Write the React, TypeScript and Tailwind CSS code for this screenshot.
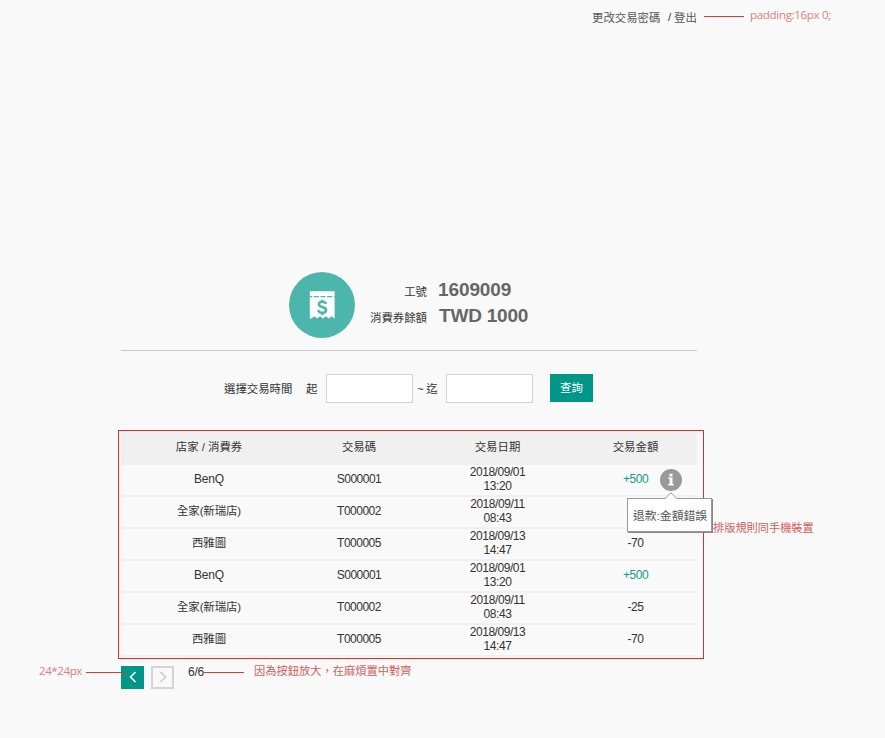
import React from 'react';

type Row = { shop: string; code: string; date: string; time: string; amount?: string; info?: string };

const rows: Row[] = [
  { shop: 'BenQ', code: 'S000001', date: '2018/09/01', time: '13:20', amount: '+500', info: '退款:金額錯誤' },
  { shop: '全家(新瑞店)', code: 'T000002', date: '2018/09/11', time: '08:43' },
  { shop: '西雅圖', code: 'T000005', date: '2018/09/13', time: '14:47', amount: '-70' },
  { shop: 'BenQ', code: 'S000001', date: '2018/09/01', time: '13:20', amount: '+500' },
  { shop: '全家(新瑞店)', code: 'T000002', date: '2018/09/11', time: '08:43', amount: '-25' },
  { shop: '西雅圖', code: 'T000005', date: '2018/09/13', time: '14:47', amount: '-70' },
];

const columns = 'grid grid-cols-[176px_124px_153px_123px] items-center text-center';

function TopBar() {
  return (
    <header className="flex h-[34px] items-center pl-[592px] whitespace-nowrap">
      <a className="w-[76px] pt-px text-[#555]">更改交易密碼</a>
      <span className="w-[6px]">/</span>
      <a className="w-[30px] pt-px text-[#555]">登出</a>
      <span className="mb-[2px] h-px w-10 bg-[#d43c3c]" />
      <span className="mb-[4px] ml-[6px] font-['Open_Sans',sans-serif] text-[11.6px] tracking-[-0.35px] text-[#dd7f7f]">
        padding:16px 0;
      </span>
    </header>
  );
}

function CouponIcon() {
  return (
    <svg className="h-[66px] w-[66px]" viewBox="0 0 66 66">
      <circle cx="33" cy="33" r="33" fill="#4db6ac" />
      <path
        fill="#fff"
        d="M20.8 19.2h24.8v27.3q-1-.1-1.4-1.1a2 2 0 0 0-3.4 0q-1.1 1.8-2.3 0a2 2 0 0 0-3.4 0q-1.1 1.8-2.3 0a2 2 0 0 0-3.4 0q-1.1 1.8-2.3 0a2 2 0 0 0-3.4 0q-.7 1.2-2.9 1.1z"
      />
      <path d="M20.8 24.6h24.8" stroke="#4db6ac" strokeWidth="1.2" strokeDasharray="5 1.6" strokeDashoffset="2.5" />
      <path
        d="M36.8 32c-.4-1.5-1.6-2.2-3.5-2.2-2.1 0-3.4 1-3.4 2.5 0 1.7 1.5 2.2 3.4 2.7 2 .5 3.7 1.1 3.7 2.9s-1.5 2.8-3.7 2.8-3.7-.8-4-2.6M33.2 27.8v2.4M33.2 40.4v2.6"
        fill="none"
        stroke="#4db6ac"
        strokeWidth="2.6"
      />
    </svg>
  );
}

function Summary() {
  return (
    <section className="flex h-[79px] items-start border-b border-[#c8c8c8] pl-[168px]">
      <CouponIcon />
      <dl className="ml-[15px] mt-[5px] grid auto-rows-[26px] grid-cols-[57px_auto] items-center gap-x-[11px] whitespace-nowrap">
        <dt className="pt-[4px] text-right leading-[22px]">工號</dt>
        <dd className="text-[19px] leading-[26px] font-bold tracking-[-0.1px] text-[#666]">1609009</dd>
        <dt className="pt-[4px] text-right leading-[22px]">消費券餘額</dt>
        <dd className="pl-px text-[19px] leading-[26px] font-bold tracking-[-0.2px] text-[#666]">TWD 1000</dd>
      </dl>
    </section>
  );
}

function SearchForm() {
  return (
    <form className="mt-[22px] flex h-[30px] items-center pl-[103px] whitespace-nowrap">
      <span className="w-[82px] pt-px">選擇交易時間</span>
      <span className="w-5 pt-px">起</span>
      <input className="h-[29px] w-[87px] border border-[#d3d3d3] bg-white" />
      <span className="w-[33px] pt-px pl-1 tracking-[-0.3px]">~ 迄</span>
      <input className="h-[29px] w-[87px] border border-[#d3d3d3] bg-white" />
      <button type="button" className="mb-px ml-[17px] h-7 w-[43px] bg-[#009688] text-white">
        查詢
      </button>
    </form>
  );
}

function InfoTip({ text }: { text: string }) {
  return (
    <div className="absolute top-[4px] right-[15px] z-20 h-[22px] w-[22px] tracking-normal">
      <svg className="h-[22px] w-[22px]" viewBox="0 0 22 22">
        <circle cx="11" cy="11" r="11" fill="#999" />
        <path fill="#fff" d="M9.5 4.7h3v2.7h-3zM8.3 8.6h4.2v6.5h1.3v1.5H8.2v-1.5h1.4V10H8.3z" />
      </svg>
      <div className="absolute top-[29px] left-[-33px] flex h-[34px] w-[85px] items-center border border-[#999] bg-white pt-px pl-[5px] text-[11.8px] whitespace-nowrap text-[#555] shadow-[1px_1px_0_#888]">
        {text}
        <svg className="absolute -top-[7px] left-[36px] h-[8px] w-[14px]" viewBox="0 0 14 8">
          <path d="M1 7 7 1l6 6v1H1z" fill="#fff" />
          <path d="M1 6.7 7 .8l6 5.9" fill="none" stroke="#999" />
        </svg>
      </div>
    </div>
  );
}

function TransactionTable() {
  return (
    <section className="relative mt-[28px]">
      <div className={`${columns} h-[34px] bg-[#f0f0f0] pb-[2px]`}>
        <span>店家 / 消費券</span>
        <span>交易碼</span>
        <span>交易日期</span>
        <span>交易金額</span>
      </div>
      {rows.map((row, i) => (
        <div
          key={i}
          className={`${columns} relative h-8 border-b-2 border-[#f0f0f0] pb-[2px] text-[12px] tracking-[-0.45px]`}
        >
          {row.shop === 'BenQ' ? (
            <span className="tracking-[-0.2px]">{row.shop}</span>
          ) : (
            <span className="text-[11.4px] tracking-[-0.1px]">{row.shop}</span>
          )}
          <span className="tracking-[-0.5px]">{row.code}</span>
          <span className="leading-[14px]">
            {row.date}
            <br />
            {row.time}
          </span>
          <span className={row.amount?.startsWith('+') ? 'text-[#159a8c]' : ''}>{row.amount}</span>
          {row.info && <InfoTip text={row.info} />}
        </div>
      ))}
      <div className="pointer-events-none absolute top-[-1px] right-[-7px] bottom-[-2px] left-[-3px] z-10 border border-[#d32f2f]" />
      <p className="absolute top-[89px] left-[592px] text-[11.2px] whitespace-nowrap text-[#d36060]">
        排版規則同手機裝置
      </p>
    </section>
  );
}

function Pagination() {
  return (
    <nav className="relative mt-[9px] flex h-[23px] items-center whitespace-nowrap">
      <button className="mb-px flex h-[23px] w-[23px] items-center justify-center bg-[#009688]">
        <svg className="h-3 w-2" viewBox="0 0 8 12">
          <path d="M6.5 1 1.5 6l5 5" fill="none" stroke="#fff" strokeWidth="1.6" />
        </svg>
      </button>
      <button className="mb-px ml-[7px] flex h-[23px] w-[23px] items-center justify-center border-2 border-[#d4d4d4]">
        <svg className="h-3 w-2" viewBox="0 0 8 12">
          <path d="m1.5 1 5 5-5 5" fill="none" stroke="#c8c8c8" strokeWidth="1.6" />
        </svg>
      </button>
      <span className="mb-[12px] ml-[14px] w-4 text-[12px] tracking-[-0.2px]">6/6</span>
      <span className="mb-[10px] h-px w-10 bg-[#d43c3c]" />
      <span className="mb-[14px] ml-[10px] text-[11.25px] text-[#d36060]">因為按鈕放大，在麻煩置中對齊</span>
      <div className="absolute top-0 left-[-82px] flex h-[13px] items-center">
        <span className="mb-[4px] w-[47px] font-['Open_Sans',sans-serif] text-[11.6px] tracking-[-0.45px] text-[#dd7f7f]">
          24*24px
        </span>
        <span className="h-px w-10 bg-[#d43c3c]" />
      </div>
    </nav>
  );
}

export default function App() {
  return (
    <div className="h-[738px] w-[885px] overflow-hidden bg-[#f9f9f9] font-['Liberation_Sans','Noto_Sans_CJK_TC',sans-serif] text-[11.4px] leading-[16px] text-[#333]">
      <TopBar />
      <main className="mt-[238px] ml-[121px] w-[576px]">
        <Summary />
        <SearchForm />
        <TransactionTable />
        <Pagination />
      </main>
    </div>
  );
}
